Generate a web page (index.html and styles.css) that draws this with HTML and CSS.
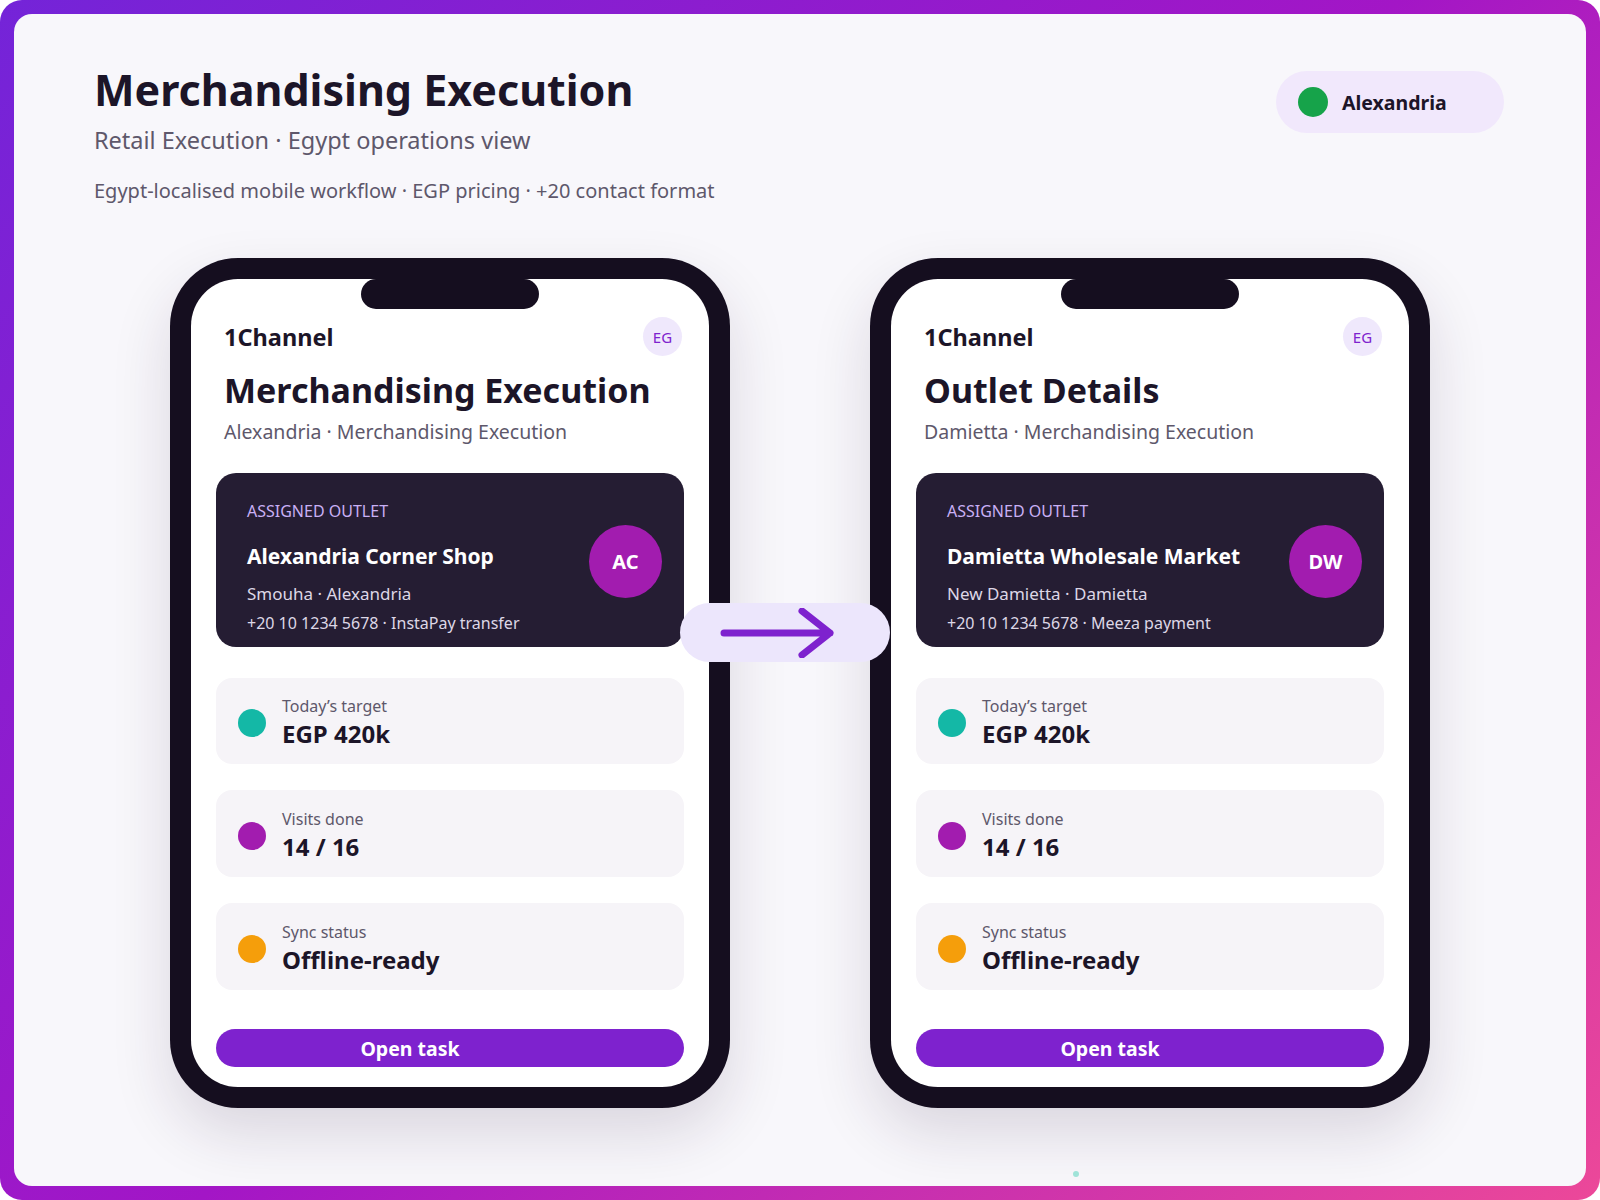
FILE: index.html
```html
<!DOCTYPE html>
<html>
  <head>
    <title>Merchandising Execution</title>
    <link rel="stylesheet" href="styles.css">
  </head>
  <body>
    <div class="frame">
      <div class="panel">
        <div class="header">
          <div>
            <h1>Merchandising Execution</h1>
            <p class="subtitle">Retail Execution · Egypt operations view</p>
            <p class="note">Egypt-localised mobile workflow · EGP pricing · +20 contact format</p>
          </div>
          <div class="region-pill">
            <span class="region-dot"></span>
            <span>Alexandria</span>
          </div>
        </div>

        <div class="phones">
          <!-- phone 1 -->
          <div class="phone">
            <div class="screen">
              <div class="notch"></div>
              <div class="app-bar">
                <span class="brand">1Channel</span>
                <span class="country">EG</span>
              </div>
              <h2 class="screen-title">Merchandising Execution</h2>
              <p class="screen-sub">Alexandria · Merchandising Execution</p>

              <div class="outlet-card">
                <div class="outlet-info">
                  <div class="outlet-label">ASSIGNED OUTLET</div>
                  <div class="outlet-name">Alexandria Corner Shop</div>
                  <div class="outlet-area">Smouha · Alexandria</div>
                  <div class="outlet-contact">+20 10 1234 5678 · InstaPay transfer</div>
                </div>
                <div class="avatar">AC</div>
              </div>

              <div class="stat">
                <span class="dot dot-teal"></span>
                <div>
                  <div class="stat-label">Today’s target</div>
                  <div class="stat-value">EGP 420k</div>
                </div>
              </div>
              <div class="stat">
                <span class="dot dot-purple"></span>
                <div>
                  <div class="stat-label">Visits done</div>
                  <div class="stat-value">14 / 16</div>
                </div>
              </div>
              <div class="stat">
                <span class="dot dot-amber"></span>
                <div>
                  <div class="stat-label">Sync status</div>
                  <div class="stat-value">Offline-ready</div>
                </div>
              </div>

              <button type="button" class="open-btn">Open task</button>
            </div>
          </div>

          <!-- phone 2 -->
          <div class="phone">
            <div class="screen">
              <div class="notch"></div>
              <div class="app-bar">
                <span class="brand">1Channel</span>
                <span class="country">EG</span>
              </div>
              <h2 class="screen-title">Outlet Details</h2>
              <p class="screen-sub">Damietta · Merchandising Execution</p>

              <div class="outlet-card">
                <div class="outlet-info">
                  <div class="outlet-label">ASSIGNED OUTLET</div>
                  <div class="outlet-name">Damietta Wholesale Market</div>
                  <div class="outlet-area">New Damietta · Damietta</div>
                  <div class="outlet-contact">+20 10 1234 5678 · Meeza payment</div>
                </div>
                <div class="avatar">DW</div>
              </div>

              <div class="stat">
                <span class="dot dot-teal"></span>
                <div>
                  <div class="stat-label">Today’s target</div>
                  <div class="stat-value">EGP 420k</div>
                </div>
              </div>
              <div class="stat">
                <span class="dot dot-purple"></span>
                <div>
                  <div class="stat-label">Visits done</div>
                  <div class="stat-value">14 / 16</div>
                </div>
              </div>
              <div class="stat">
                <span class="dot dot-amber"></span>
                <div>
                  <div class="stat-label">Sync status</div>
                  <div class="stat-value">Offline-ready</div>
                </div>
              </div>

              <button type="button" class="open-btn">Open task</button>
            </div>
          </div>

          <div class="flow-arrow">
            <svg width="124" height="50" viewBox="0 0 124 50">
              <path d="M8 25 H114 M86 3 L114 25 L86 47" fill="none" stroke="#7e22ce" stroke-width="7" stroke-linecap="round" stroke-linejoin="round"/>
            </svg>
          </div>
        </div>

        <span class="spark"></span>
      </div>
    </div>
  </body>
</html>
```

FILE: styles.css
```css
* {
  box-sizing: border-box;
}

body {
  margin: 0;
  font-family: "Noto Sans", "Open Sans", sans-serif;
  color: #1c1528;
  background: #ffffff;
}

.frame {
  height: 1200px;
  padding: 14px;
  border-radius: 22px;
  background: linear-gradient(135deg, #7424d8 0%, #a316c6 50%, #ec4899 100%);
}

.panel {
  position: relative;
  height: 100%;
  border-radius: 18px;
  background-color: #f8f7fb;
  overflow: hidden;
}

/* page header */
.header {
  display: flex;
  justify-content: space-between;
  align-items: flex-start;
  padding: 47px 82px 0 80px;
}

h1 {
  margin: 0;
  font-size: 43px;
  line-height: 58px;
  font-weight: 700;
  color: #1c1528;
}

.subtitle {
  margin: 6px 0 0;
  font-size: 23.5px;
  line-height: 30px;
  color: #5e586b;
}

.note {
  margin: 23px 0 0;
  font-size: 20px;
  line-height: 26px;
  color: #5e586b;
}

.region-pill {
  display: flex;
  align-items: center;
  gap: 14px;
  width: 228px;
  height: 62px;
  margin-top: 10px;
  padding-left: 22px;
  border-radius: 31px;
  background-color: #f1e8fc;
  font-size: 19.5px;
  font-weight: 700;
}

.region-dot {
  width: 30px;
  height: 30px;
  border-radius: 50%;
  background-color: #16a34a;
}

/* phones */
.phones {
  position: relative;
  display: flex;
  justify-content: center;
  gap: 140px;
  margin-top: 54px;
}

.phone {
  width: 560px;
  height: 850px;
  padding: 21px;
  border-radius: 68px;
  background-color: #150e1f;
  box-shadow: 0 26px 60px rgba(40, 20, 60, 0.14);
}

.screen {
  display: flex;
  flex-direction: column;
  height: 100%;
  padding: 0 25px 20px;
  border-radius: 47px;
  background-color: #ffffff;
}

.notch {
  width: 178px;
  height: 30px;
  margin: 0 auto;
  border-radius: 15px;
  background-color: #150e1f;
}

.app-bar {
  display: flex;
  justify-content: space-between;
  align-items: center;
  height: 40px;
  margin-top: 8px;
  padding: 0 2px 0 8px;
}

.brand {
  font-size: 23.5px;
  font-weight: 700;
}

.country {
  display: flex;
  align-items: center;
  justify-content: center;
  width: 39px;
  height: 39px;
  border-radius: 50%;
  background-color: #efe8fc;
  color: #7e22ce;
  font-size: 15px;
}

.screen-title {
  margin: 11px 0 0 8px;
  font-size: 34px;
  line-height: 44px;
  font-weight: 700;
}

.screen-sub {
  margin: 7px 0 0 8px;
  font-size: 19.5px;
  line-height: 26px;
  color: #5e586b;
}

.outlet-card {
  display: flex;
  justify-content: space-between;
  align-items: center;
  height: 174px;
  margin-top: 28px;
  padding: 0 22px 0 31px;
  border-radius: 20px;
  background-color: #251d33;
  color: #ffffff;
}

.outlet-info {
  padding-top: 15px;
}

.outlet-label {
  font-size: 16px;
  line-height: 20px;
  color: #c9b0f5;
}

.outlet-name {
  margin-top: 21px;
  font-size: 21px;
  line-height: 28px;
  font-weight: 700;
}

.outlet-area {
  margin-top: 13px;
  font-size: 17px;
  line-height: 22px;
  color: #ddd7e6;
}

.outlet-contact {
  margin-top: 7px;
  font-size: 16px;
  line-height: 22px;
  color: #ddd7e6;
}

.avatar {
  display: flex;
  align-items: center;
  justify-content: center;
  width: 73px;
  height: 73px;
  margin-top: 4px;
  border-radius: 50%;
  background-color: #a21caf;
  font-size: 20px;
  font-weight: 700;
}

.stat {
  display: flex;
  align-items: center;
  gap: 16px;
  height: 87px;
  margin-top: 26px;
  padding: 4px 22px 0;
  border-radius: 16px;
  background-color: #f6f4f8;
}

.outlet-card + .stat {
  margin-top: 31px;
}

.dot {
  width: 28px;
  height: 28px;
  border-radius: 50%;
}

.dot-teal {
  background-color: #14b8a6;
}

.dot-purple {
  background-color: #a21caf;
}

.dot-amber {
  background-color: #f59e0b;
}

.stat-label {
  font-size: 16px;
  line-height: 20px;
  color: #5e586b;
}

.stat-value {
  margin-top: 2px;
  font-size: 24px;
  line-height: 32px;
  font-weight: 700;
}

.open-btn {
  height: 38px;
  margin-top: 39px;
  padding: 0 80px 0 0;
  border: none;
  border-radius: 19px;
  background-color: #7e22ce;
  color: #ffffff;
  font-family: inherit;
  font-size: 19.5px;
  font-weight: 700;
  cursor: pointer;
}

/* connector between the two screens */
.flow-arrow {
  position: absolute;
  top: 345px;
  left: 50%;
  display: flex;
  align-items: center;
  width: 210px;
  height: 59px;
  margin-left: -120px;
  padding-left: 36px;
  border-radius: 30px;
  background-color: #ece6fc;
}

.spark {
  position: absolute;
  left: 1059px;
  top: 1157px;
  width: 6px;
  height: 6px;
  border-radius: 50%;
  background-color: #9fe3d8;
}
```
